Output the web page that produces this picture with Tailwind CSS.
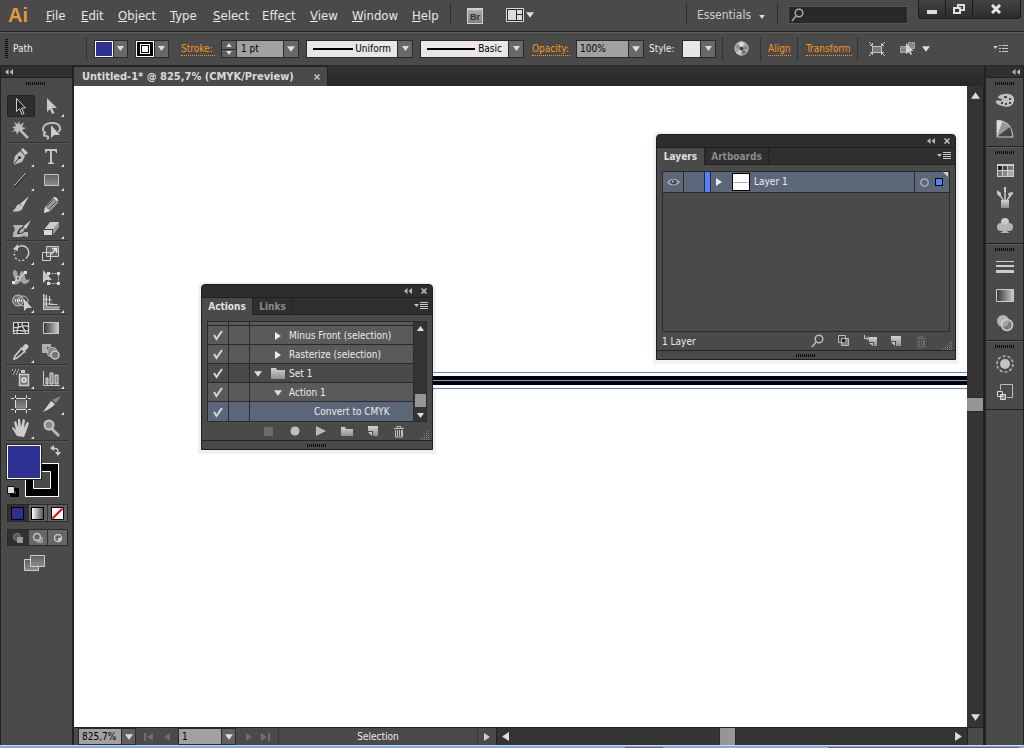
<!DOCTYPE html>
<html lang="en">
<head>
<meta charset="utf-8">
<title>Untitled-1 - Illustrator workspace</title>
<script src="https://cdn.jsdelivr.net/npm/@tailwindcss/browser@4"></script>
</head>
<body class="h-screen overflow-hidden bg-[#4a4a4a] font-['DejaVu_Sans_Condensed','DejaVu_Sans',sans-serif] text-[10px] leading-4 text-[#ececec]">
<svg class="absolute size-0" aria-hidden="true">
  <defs>
    <linearGradient id="metal" x1="0" y1="0" x2="0" y2="1"><stop offset="0" stop-color="#d2d2d2"/><stop offset="1" stop-color="#8e8e8e"/></linearGradient>
    <linearGradient id="fade" x1="0" y1="0" x2="1" y2="0"><stop offset="0" stop-color="#333"/><stop offset="1" stop-color="#ccc"/></linearGradient>
    <linearGradient id="plate" x1="0" y1="0" x2="0" y2="1"><stop offset="0" stop-color="#606060"/><stop offset="1" stop-color="#8c8c8c"/></linearGradient>
    <symbol id="down" viewBox="0 0 7 5"><path d="M0 0h7L3.500 5z" fill="#e0dce0"/></symbol>
    <symbol id="up" viewBox="0 0 7 5"><path d="M0 5h7L3.500 0z" fill="#e0dce0"/></symbol>
    <symbol id="right" viewBox="0 0 6 8"><path d="M0 0l6 4-6 4z" fill="currentColor"/></symbol>
    <symbol id="collapse" viewBox="0 0 8 6"><path d="M3.500 0v6L0 3zM8 0v6L4.500 3z" fill="#b8b8b8"/></symbol>
    <symbol id="cross" viewBox="0 0 6 6"><path d="M.5.500l5 5M5.500.5l-5 5" stroke="#c4c4c4" stroke-width="1.500"/></symbol>
    <symbol id="grip" viewBox="0 0 20 3"><path d="M.5 0v3m2-3v3m2-3v3m2-3v3m2-3v3m2-3v3m2-3v3m2-3v3m2-3v3m2-3v3" stroke="#0c0c0c"/></symbol>
    <symbol id="check" viewBox="0 0 12 12"><path d="M2 6l2.500 4L10 2" fill="none" stroke="#d8d8d8" stroke-width="2"/></symbol>
    <symbol id="panelmenu" viewBox="0 0 14 8"><path d="M0 2h5L2.500 5z" fill="#c4c4c4"/><path d="M6 .5h8M6 2.500h8M6 4.500h8M6 6.500h8" stroke="#c4c4c4"/></symbol>
    <symbol id="more" viewBox="0 0 3 3"><path d="M3 0v3H0z" fill="#e0e0e0"/></symbol>
    <symbol id="newitem" viewBox="0 0 12 12"><path d="M1 1h10v10H6V6H1z" fill="url(#metal)"/><path d="M1 7h4v4z" fill="#c8c8c8"/></symbol>
    <symbol id="trash" viewBox="0 0 12 13"><path d="M1 3.500h10M4 3V1.500h4V3M2.500 5v7h7V5M4.500 5v6m2-6v6m2-6v6" fill="none" stroke="currentColor"/></symbol>
    <symbol id="corner" viewBox="0 0 10 10"><path d="M8 1.500h1M6 3.500h1m1 0h1M4 5.500h1m1 0h1m1 0h1M2 7.500h1m1 0h1m1 0h1m1 0h1M0 9.500h1m1 0h1m1 0h1m1 0h1m1 0h1" stroke="#858585"/></symbol>
  </defs>
</svg>

<div class="flex h-full flex-col">
  <!-- Menu bar -->
  <header class="flex h-8 shrink-0 items-start border-b border-[#252525] bg-[#4a4a4a]">
    <div class="flex h-[30px] w-[38px] items-center pl-2 font-['Liberation_Sans',sans-serif] text-[20px] leading-6 font-bold text-[#e09a3a]">Ai</div>
    <nav class="flex h-8 items-center text-[13px] text-[#e8e8e8]" aria-label="Main menu">
      <button class="w-[35px] pl-2 text-left"><u>F</u>ile</button>
      <button class="w-[37px] pl-2 text-left"><u>E</u>dit</button>
      <button class="w-[52px] pl-2 text-left"><u>O</u>bject</button>
      <button class="w-[43px] pl-2 text-left"><u>T</u>ype</button>
      <button class="w-[49px] pl-2 text-left"><u>S</u>elect</button>
      <button class="w-[48px] pl-2 text-left">Effe<u>c</u>t</button>
      <button class="w-[42px] pl-2 text-left"><u>V</u>iew</button>
      <button class="w-[60px] pl-2 text-left"><u>W</u>indow</button>
      <button class="w-[46px] pl-2 text-left"><u>H</u>elp</button>
    </nav>
    <div class="mt-1 h-5 border-l border-[#2c2c2c]"></div>
    <button class="mt-2 ml-4 h-4 w-4 border border-t-2 border-[#d0d0d0] bg-linear-to-b from-[#aaa] to-[#808080] font-['Liberation_Sans',sans-serif] text-[9px] leading-3 font-bold text-[#333]">Br</button>
    <button class="mt-[7px] ml-[23px] flex items-center gap-[2px]" aria-label="Arrange documents">
      <svg width="18" height="16" viewBox="0 0 18 16"><path d="M.5 1.500h17v13H.5z" fill="#2a2a2a" stroke="#dcdcdc"/><path d="M2 3h8v10H2zM11 3h5v4h-5zM11 8h5v5h-5z" fill="#dcdcdc"/></svg>
      <svg width="8" height="6"><use href="#down"/></svg>
    </button>
    <div class="flex-1"></div>
    <div class="mt-1 h-5 border-l border-[#2c2c2c]"></div>
    <button class="mt-[7px] flex w-[90px] items-center gap-2 pl-[10px] text-[12px] text-[#cfcfcf]">Essentials<svg class="mt-1" width="6" height="4"><use href="#down"/></svg></button>
    <div class="mt-1 h-5 border-l border-[#2c2c2c]"></div>
    <label class="mt-[6px] ml-[10px] flex h-[18px] w-[120px] items-center border border-[#555] bg-[#292929] pl-[2px]">
      <svg class="shrink-0" width="13" height="14" viewBox="0 0 13 14" fill="none" stroke="#aaa" stroke-width="1.500"><circle cx="8" cy="5" r="3.800"/><path d="M5 8l-4 5"/></svg>
      <input class="w-full min-w-0 bg-transparent text-[10px] outline-none" aria-label="Search">
    </label>
    <div class="mr-[3px] ml-[10px] flex h-[19px] rounded-b-sm border border-t-0 border-[#1c1c1c] bg-linear-to-b from-[#444] to-[#2c2c2c]">
      <button class="flex w-[27px] items-center justify-center border-r border-[#1c1c1c]" aria-label="Minimize"><svg width="11" height="12"><path d="M0 7h10v4H0z" fill="#ddd"/></svg></button>
      <button class="flex w-[27px] items-center justify-center border-r border-[#1c1c1c]" aria-label="Restore"><svg width="12" height="12" fill="none" stroke="#e0e0e0" stroke-width="2"><path d="M5 5V2h6v5H8"/><path d="M1 5h6v5H1z"/></svg></button>
      <button class="flex w-[47px] items-center justify-center" aria-label="Close"><svg width="11" height="10"><path d="M1 1l8 8M9 1L1 9" stroke="#e4e4e4" stroke-width="3"/></svg></button>
    </div>
  </header>

  <!-- Control bar -->
  <section class="flex h-[34px] shrink-0 items-center border-b border-[#252525] bg-[#4a4a4a] shadow-[inset_0_1px_0_#5c5c5c]" aria-label="Control bar">
    <svg class="ml-[5px]" width="3" height="20"><path d="M1.500 0v20" stroke="#0c0c0c" stroke-width="3" stroke-dasharray="1 1"/></svg>
    <span class="ml-[5px] w-[73px]">Path</span>
    <div class="h-6 border-l border-[#333]"></div>
    <button class="ml-[7px] flex h-[18px] border border-[#2a2a2a]" aria-label="Fill">
      <span class="h-4 w-[18px] border border-white bg-[#2d3193]"></span>
      <span class="grid h-4 w-[14px] place-items-center border-l border-[#2a2a2a] bg-[#686868]"><svg width="7" height="5"><use href="#down"/></svg></span>
    </button>
    <button class="ml-[7px] flex h-[18px] border border-[#2a2a2a]" aria-label="Stroke colour">
      <span class="grid h-4 w-[18px] place-items-center border border-white bg-black"><span class="grid size-[10px] place-items-center border border-white"><span class="size-[6px] bg-white"></span></span></span>
      <span class="grid h-4 w-[14px] place-items-center border-l border-[#2a2a2a] bg-[#686868]"><svg width="7" height="5"><use href="#down"/></svg></span>
    </button>
    <a href="#" class="ml-[12px] w-[34px] border-b border-dotted border-[#f7931e] leading-[13px] text-[#f7931e]">Stroke:</a>
    <div class="ml-[6px] flex h-[18px] border border-[#2a2a2a]">
      <div class="flex w-[15px] flex-col border-r border-[#2a2a2a] bg-[#606060]">
        <button class="grid h-2 place-items-center" aria-label="Increase"><svg width="6" height="4"><use href="#up"/></svg></button>
        <button class="grid h-2 place-items-center border-t border-[#2a2a2a]" aria-label="Decrease"><svg width="6" height="4"><use href="#down"/></svg></button>
      </div>
      <input class="h-4 w-[46px] bg-[#a39fa3] pl-1 text-black" value="1 pt" aria-label="Stroke weight">
      <button class="grid w-[15px] place-items-center border-l border-[#2a2a2a] bg-[#686868]" aria-label="Stroke weights"><svg width="8" height="6"><use href="#down"/></svg></button>
    </div>
    <button class="ml-[7px] flex h-[18px] border border-[#2a2a2a]" aria-label="Width profile">
      <span class="flex h-4 w-[90px] items-center justify-between bg-[#e9e5e9] pr-[6px] pl-[6px] text-black"><span class="h-[2px] w-10 bg-black"></span>Uniform</span>
      <span class="grid h-4 w-[15px] place-items-center border-l border-[#2a2a2a] bg-[#686868]"><svg width="7" height="5"><use href="#down"/></svg></span>
    </button>
    <button class="ml-[7px] flex h-[18px] border border-[#2a2a2a]" aria-label="Brush definition">
      <span class="flex h-4 w-[87px] items-center justify-between bg-[#e9e5e9] pr-[6px] pl-[6px] text-black"><span class="h-[2px] w-12 bg-black"></span>Basic</span>
      <span class="grid h-4 w-[15px] place-items-center border-l border-[#2a2a2a] bg-[#686868]"><svg width="7" height="5"><use href="#down"/></svg></span>
    </button>
    <a href="#" class="ml-[8px] w-[38px] border-b border-dotted border-[#f7931e] leading-[13px] text-[#f7931e]">Opacity:</a>
    <div class="ml-[6px] flex h-[18px] border border-[#2a2a2a]">
      <input class="h-4 w-[51px] bg-[#a39fa3] pl-[3px] text-black" value="100%" aria-label="Opacity">
      <button class="grid w-[15px] place-items-center border-l border-[#2a2a2a] bg-[#686868]" aria-label="Opacity values"><svg width="8" height="6"><use href="#down"/></svg></button>
    </div>
    <span class="ml-[5px] w-[28px]">Style:</span>
    <button class="ml-[5px] flex h-[18px] border border-[#2a2a2a]" aria-label="Graphic style">
      <span class="h-4 w-[17px] bg-[#e9e5e9]"></span>
      <span class="grid h-4 w-[15px] place-items-center border-l border-[#2a2a2a] bg-[#686868]"><svg width="7" height="5"><use href="#down"/></svg></span>
    </button>
    <div class="ml-[6px] h-6 border-l border-[#333]"></div>
    <button class="ml-[11px]" aria-label="Recolor artwork"><svg width="15" height="15" viewBox="0 0 15 15"><circle cx="7.500" cy="7.500" r="7" fill="#a4a4a4"/><path d="M7.500 7.500L4 1.500A7 7 0 0 1 11 1.500z" fill="#d8d8d8"/><path d="M7.500 7.500L14 4a7 7 0 0 1 .5 5z" fill="#888"/><path d="M7.500 7.500L13 12a7 7 0 0 1-4 2.500z" fill="#6c6c6c"/><path d="M7.500 7.500L7 14.500A7 7 0 0 1 2 12z" fill="#ccc"/><path d="M7.500 7.500L.5 6a7 7 0 0 1 2-3z" fill="#888"/><circle cx="7.500" cy="7.500" r="6.500" fill="none" stroke="#b8b8b8"/><circle cx="7.500" cy="7.500" r="1.800" fill="#3a3a3a"/></svg></button>
    <div class="ml-[11px] h-6 border-l border-[#333]"></div>
    <a href="#" class="ml-[7px] w-[23px] border-b border-dotted border-[#f7931e] leading-[13px] text-[#f7931e]">Align</a>
    <div class="ml-[6px] h-6 border-l border-[#333]"></div>
    <a href="#" class="ml-[8px] w-[46px] border-b border-dotted border-[#f7931e] leading-[13px] text-[#f7931e]">Transform</a>
    <div class="ml-[5px] h-6 border-l border-[#333]"></div>
    <button class="ml-[11px]" aria-label="Isolate selected object"><svg width="16" height="14" viewBox="0 0 16 14" fill="none" stroke="#c4c4c4"><path d="M3.500 4.500h9v6h-9z" fill="#777"/><path d="M0 0l3 3M16 0l-3 3M0 14l3-3M16 14l-3-3"/><path d="M1 3.500h2.500V1M15 3.500h-2.500V1M1 10.500h2.500V13M15 10.500h-2.500V13"/></svg></button>
    <button class="ml-[14px] flex items-center gap-[6px]" aria-label="Select similar objects"><svg width="17" height="15" viewBox="0 0 17 15"><path d="M1.500 5.500h6v6h-6zM9.500 1.500h6v6h-6z" fill="#888" stroke="#c4c4c4" stroke-dasharray="2 1"/><path d="M7 2v11l3-2 1.500 3 1.500-1-1.500-3h3z" fill="#d4d4d4"/></svg><svg width="8" height="6"><use href="#down"/></svg></button>
    <div class="flex-1"></div>
    <button class="mr-[16px]" aria-label="Control bar menu"><svg width="15" height="9" viewBox="0 0 15 9"><path d="M0 2h5L2.500 5z" fill="#c8c8c8"/><path d="M6 1.500h2m1 0h6m-9 3h2m1 0h6m-9 3h2m1 0h6" stroke="#c8c8c8"/></svg></button>
  </section>

  <main class="flex min-h-0 flex-1">
    <!-- Tools -->
    <aside class="flex w-[74px] shrink-0 flex-col border-r-2 border-l border-[#222] bg-[#4a4a4a]" aria-label="Tools">
      <button class="flex h-3 items-center border-b border-[#222] bg-[#2f2f2f] pl-1" aria-label="Collapse tools"><svg width="8" height="6"><use href="#collapse"/></svg></button>
      <div class="flex h-4 items-start pt-[4px] pl-[25px]"><svg width="20" height="3"><use href="#grip"/></svg></div>
      <div class="flex flex-col pl-[5px]">
        <div class="grid w-[60px] grid-cols-2 [&_button]:h-6">
          <button aria-label="Selection"><svg width="30" height="24"><rect x="1.500" y="1.500" width="27" height="21" rx="1" fill="#2e2e2e" stroke="#242424"/><path d="M10.500 4.500v13l3-3 2.500 6 2-1-2.500-5.500h4z" fill="#222" stroke="#d0d0d0"/></svg></button>
          <button aria-label="Direct selection"><svg width="30" height="24"><path d="M11 4v14l3-3 2 5 2.500-1L16 14h5z" fill="#c8c8c8"/><use href="#more" x="25" y="20" width="3" height="3"/></svg></button>
          <button aria-label="Magic wand"><svg width="30" height="24"><path d="M13 3l1 4 4-3-2 5 4 1-4 2 1 3-4-2-2 4-1-4-4 1 3-3-3-2 4-1-2-4 4 2z" fill="#bcbcbc"/><path d="M15 13l7 7" stroke="#bcbcbc" stroke-width="2.500"/></svg></button>
          <button aria-label="Lasso"><svg width="30" height="24"><path d="M10 15C5 13 6 6 15 5s11 6 7 9M10 15c-3 0-3 3 0 3s3 2 1 3" fill="none" stroke="#bcbcbc" stroke-width="2"/><path d="M15 7v13l3-3h6z" fill="#ccc"/></svg></button>
        </div>
        <div class="mr-1 h-[2px] border-t border-[#333] bg-[#555]"></div>
        <div class="grid w-[60px] grid-cols-2 [&_button]:h-6">
          <button aria-label="Pen"><svg width="30" height="24"><path d="M17 4l5 5-3 2-4-5z" fill="#ccc"/><path d="M14 7l5 5-3 6-9 3 2-9z" fill="#bdbdbd"/><path d="M7 21l6-7" stroke="#333"/><circle cx="13.500" cy="13.500" r="1.500" fill="#333"/><use href="#more" x="25" y="20" width="3" height="3"/></svg></button>
          <button aria-label="Type"><svg width="30" height="24"><path d="M9 5h12v4h-1l-1-2h-3v11l2 1v1h-6v-1l2-1V7h-3l-1 2H9z" fill="#c4c4c4"/><use href="#more" x="25" y="20" width="3" height="3"/></svg></button>
          <button aria-label="Line segment"><svg width="30" height="24"><path d="M8 19L21 5" stroke="#222" stroke-width="1.500"/><path d="M8 18L20 5" stroke="#d4d4d4"/><use href="#more" x="25" y="20" width="3" height="3"/></svg></button>
          <button aria-label="Rectangle"><svg width="30" height="24"><path d="M8.500 6.500h14v11h-14z" fill="url(#plate)" stroke="#c4c4c4"/><use href="#more" x="25" y="20" width="3" height="3"/></svg></button>
          <button aria-label="Paintbrush"><svg width="30" height="24"><path d="M23 4l-6 11-3-3z" fill="#d0d0d0"/><path d="M13 12l4 3c-1 5-7 5-11 4 4-1 3-5 7-7z" fill="#c4c4c4"/></svg></button>
          <button aria-label="Pencil"><svg width="30" height="24"><path d="M17 6l5 5-8 8-6 2 1-6z" fill="#999"/><path d="M17 6c2-3 6 1 5 4z" fill="#ddd"/><path d="M9 15l5 4-6 2z" fill="#d8d8d8"/><path d="M11 14l7-7m-5 10l7-7" stroke="#555"/><use href="#more" x="25" y="20" width="3" height="3"/></svg></button>
          <button aria-label="Blob brush"><svg width="30" height="24"><path d="M7 9h10l-3 7h8v5l-4-1-4 1H7v-4l2-3z" fill="#b4b4b4"/><path d="M11 18c1-6 5-7 7-7l2 2c-2 5-5 5-9 5z" fill="#333"/><path d="M13 17c1-4 3-5 5-5l1 1c-2 4-3 4-6 4z" fill="#aaa"/><path d="M25 4l-5 9-3-2z" fill="#d0d0d0"/></svg></button>
          <button aria-label="Eraser"><svg width="30" height="24"><path d="M14 6h9l-5 7-11 2z" fill="#ccc"/><path d="M8 14h8v5H8z" fill="#dadada"/><path d="M17 13l6-7v5l-6 8z" fill="#999"/><path d="M8 13.500h8.500V19" fill="none" stroke="#444"/><use href="#more" x="25" y="20" width="3" height="3"/></svg></button>
        </div>
        <div class="mr-1 h-[2px] border-t border-[#333] bg-[#555]"></div>
        <div class="grid w-[60px] grid-cols-2 [&_button]:h-6">
          <button aria-label="Rotate"><svg width="30" height="24"><path d="M11 6a6.500 6.500 0 0 1 10 9" fill="none" stroke="#ccc" stroke-width="1.500"/><path d="M21 15a6.500 6.500 0 0 1-12-6" fill="none" stroke="#ccc" stroke-width="1.500" stroke-dasharray="2 2"/><path d="M12 2v7L7 7z" fill="#ccc"/><use href="#more" x="25" y="20" width="3" height="3"/></svg></button>
          <button aria-label="Scale"><svg width="30" height="24"><path d="M10.500 4.500h12v10h-12z" fill="#666" stroke="#d0d0d0"/><path d="M6.500 10.500h8v8h-8z" fill="none" stroke="#d0d0d0"/><path d="M15 12l5-5m-4-.5h4.500V11" fill="none" stroke="#e8e8e8" stroke-width="1.500"/><use href="#more" x="25" y="20" width="3" height="3"/></svg></button>
          <button aria-label="Width"><svg width="30" height="24"><path d="M8 4c5 0 3 6 4 7 2 1 1-5 4-6 4 0 2 9 5 9 2 0 3-1 3-1-1 5-7 7-9 2-2 3-7 5-9 3 0 0 3-1 3-4S5 8 8 4z" fill="#a4a4a4"/><path d="M7 17L20 6" stroke="#eee"/><circle cx="12" cy="12.500" r="1.800" fill="#555" stroke="#eee"/><path d="M6 15h3v3H6zM18 5h3v3h-3z" fill="#e0e0e0"/><use href="#more" x="25" y="20" width="3" height="3"/></svg></button>
          <button aria-label="Free transform"><svg width="30" height="24"><path d="M12.500 7.500h10v10h-10z" fill="none" stroke="#bbb" stroke-dasharray="2 1"/><path d="M11 6h3v3h-3zM21 6h3v3h-3zM11 16h3v3h-3zM21 16h3v3h-3z" fill="#ddd"/><path d="M7 4v13l3-3h6z" fill="#c8c8c8"/></svg></button>
          <button aria-label="Shape builder"><svg width="30" height="24"><circle cx="12" cy="10.500" r="5.500" fill="#777" stroke="#c0c0c0"/><circle cx="17" cy="11" r="5" fill="none" stroke="#c0c0c0"/><path d="M9 10.500h8" stroke="#fff" stroke-dasharray="1 1" stroke-width="2"/><path d="M18 9v12l3-3h5z" fill="#d0d0d0"/><use href="#more" x="25" y="20" width="3" height="3"/></svg></button>
          <button aria-label="Perspective grid"><svg width="30" height="24"><path d="M7 4l4 1v12h12v3H7z" fill="#888"/><path d="M7.500 4v15.500H24M10.500 5v12H24M13.500 6v8.500h8M8 9l8 1m-8 4h9" fill="none" stroke="#ccc"/><use href="#more" x="25" y="20" width="3" height="3"/></svg></button>
        </div>
        <div class="mr-1 h-[2px] border-t border-[#333] bg-[#555]"></div>
        <div class="grid w-[60px] grid-cols-2 [&_button]:h-6">
          <button aria-label="Mesh"><svg width="30" height="24"><path d="M7 6h16v12H7z" fill="#333"/><path d="M7.500 6.500h15v11h-15zM7 11c5 3 9-4 16 0M7 16c5-5 10 2 16-2M11 6c5 5-3 8 1 12M17 6c-4 5 4 7 2 12" fill="none" stroke="#d4d4d4" stroke-width="1.200"/></svg></button>
          <button aria-label="Gradient"><svg width="30" height="24"><path d="M7.500 6.500h15v11h-15z" fill="url(#fade)" stroke="#c8c8c8"/></svg></button>
          <button aria-label="Eyedropper"><svg width="30" height="24"><path d="M18 5c2-3 7 1 3 4l-2 2 1 1-1 1-5-5 1-1 1 1z" fill="#ccc"/><path d="M15 9l-6 7-1 3 3-1 7-6" fill="none" stroke="#d0d0d0" stroke-width="1.500"/><use href="#more" x="25" y="20" width="3" height="3"/></svg></button>
          <button aria-label="Blend"><svg width="30" height="24"><path d="M6 4h9v3h-4v6H6z" fill="#b0b0b0"/><rect x="11.500" y="7.500" width="9" height="9" rx="3" fill="#888" stroke="#b8b8b8"/><circle cx="19" cy="15" r="4" fill="#777" stroke="#ccc" stroke-width="1.500"/></svg></button>
        </div>
        <div class="mr-1 h-[2px] border-t border-[#333] bg-[#555]"></div>
        <div class="grid w-[60px] grid-cols-2 [&_button]:h-6">
          <button aria-label="Symbol sprayer"><svg width="30" height="24"><path d="M6 4h1m2 0h1m2 0h1m-5 2h1m2 0h1m-5 2h1m2 0h1m2 0h1" stroke="#ccc" stroke-width="1.500"/><path d="M15 4h4v3h-4z" fill="#ccc"/><path d="M13.500 8.500h9v11h-9z" fill="#777" stroke="#ccc" stroke-width="1.500"/><circle cx="18" cy="14" r="2" fill="none" stroke="#eee" stroke-width="1.500"/><use href="#more" x="25" y="20" width="3" height="3"/></svg></button>
          <button aria-label="Column graph"><svg width="30" height="24"><path d="M7.500 5v14.500H24" fill="none" stroke="#ccc"/><path d="M10 12h2v6h-2zM14 7h3v11h-3zM19 9h3v9h-3z" fill="#888" stroke="#ddd"/><use href="#more" x="25" y="20" width="3" height="3"/></svg></button>
        </div>
        <div class="mr-1 h-[2px] border-t border-[#333] bg-[#555]"></div>
        <div class="grid w-[60px] grid-cols-2 [&_button]:h-6">
          <button aria-label="Artboard"><svg width="30" height="24"><path d="M9.500 7.500h11v9h-11z" fill="url(#plate)"/><path d="M5 6.500h3m2 0h10m2 0h3M5 17.500h3m2 0h10m2 0h3M9.500 3v3m0 2v8m0 2v3M20.500 3v3m0 2v8m0 2v3" stroke="#ddd"/></svg></button>
          <button aria-label="Slice"><svg width="30" height="24"><path d="M25 4l-5 7-4-3z" fill="#888"/><path d="M15 9l4 3c-3 4-8 6-12 8z" fill="#d4d4d4"/><use href="#more" x="25" y="20" width="3" height="3"/></svg></button>
          <button aria-label="Hand"><svg width="30" height="24"><path d="M11 20l-5-8 1-1 3 3-2-8 2-1 2 6V3h2l1 8 2-8 2 1-1 8 3-6 2 1-3 9-2 5z" fill="#ccc"/><use href="#more" x="25" y="20" width="3" height="3"/></svg></button>
          <button aria-label="Zoom"><svg width="30" height="24"><circle cx="13" cy="9" r="4.500" fill="#888" stroke="#c8c8c8" stroke-width="2"/><path d="M16 13l7 7" stroke="#b8b8b8" stroke-width="3"/></svg></button>
        </div>
        <div class="mr-1 h-[2px] border-t border-[#333] bg-[#555]"></div>
      </div>
      <button class="mt-[2px] ml-[5px] w-[56px]" aria-label="Fill and stroke">
        <svg width="56" height="54" viewBox="0 0 56 54"><path d="M19 19h34v34H19z" fill="#fff"/><path d="M20 20h32v32H20z" fill="#000"/><path d="M27.500 27.500h17v17h-17z" fill="#4a4a4a" stroke="#fff"/><path d="M0 0h36v36H0z" fill="#222"/><path d="M1 1h34v34H1z" fill="#fff"/><path d="M2 2h32v32H2z" fill="#2d3193"/><path d="M48 1v6l-4-3zM49 8h6l-3 4z" fill="#ccc"/><path d="M46 4.500h4q2 0 2 4" fill="none" stroke="#ccc" stroke-width="1.500"/><path d="M5.500 45.500h6v6h-6z" fill="none" stroke="#000" stroke-width="3"/><path d="M1.500 42.500h7v7h-7z" fill="#ddd" stroke="#111"/></svg>
      </button>
      <div class="mt-[6px] ml-[6px] grid h-[18px] w-[61px] grid-cols-3 border border-[#2a2a2a] bg-[#606060]">
        <button class="grid place-items-center bg-[#303030]" aria-label="Color"><span class="size-[13px] border border-black bg-[#2d3193]"></span></button>
        <button class="grid place-items-center border-l border-[#333]" aria-label="Gradient fill"><span class="size-[13px] border border-black bg-linear-to-r from-white to-[#555]"></span></button>
        <button class="grid place-items-center border-l border-[#333]" aria-label="None"><svg width="13" height="13"><path d="M.5.500h12v12H.5z" fill="#fff" stroke="#000"/><path d="M1.500 11.500l10-10" stroke="#f00" stroke-width="2"/></svg></button>
      </div>
      <div class="mt-[7px] ml-[6px] grid h-[17px] w-[61px] grid-cols-3 border border-[#2a2a2a] bg-[#666]">
        <button class="grid place-items-center bg-[#303030]" aria-label="Draw normal"><svg width="12" height="12"><circle cx="5" cy="5" r="3.500" fill="#555" stroke="#888"/><path d="M5 5h6v6H5z" fill="#999"/></svg></button>
        <button class="grid place-items-center border-l border-[#333]" aria-label="Draw behind"><svg width="12" height="12"><path d="M5 5h6v6H5z" fill="#999"/><circle cx="5" cy="5" r="3.500" fill="#666" stroke="#c4c4c4" stroke-width="1.500"/></svg></button>
        <button class="grid place-items-center border-l border-[#333]" aria-label="Draw inside"><svg width="12" height="12"><circle cx="6" cy="6" r="3.500" fill="#666" stroke="#c4c4c4" stroke-width="1.500"/><path d="M6 6h4l-3 4z" fill="#ddd"/></svg></button>
      </div>
      <button class="mt-[8px] ml-[23px] w-[22px]" aria-label="Screen mode"><svg width="22" height="18"><path d="M.5 5.500h14v11H.5z" fill="url(#plate)" stroke="#ccc"/><path d="M6.500 1.500h14v11h-14z" fill="url(#plate)" stroke="#ccc"/></svg></button>
    </aside>

    <!-- Document -->
    <section class="flex min-w-0 flex-1 flex-col">
      <div class="flex h-5 shrink-0 bg-linear-to-b from-[#333] to-[#282828]">
        <div class="flex h-5 items-center border-t border-r border-[#222] bg-[#4a4a4a] pr-[7px] pl-2 text-[11px] font-bold text-[#dadada]">
          <span class="w-[231px] whitespace-nowrap">Untitled-1* @ 825,7% (CMYK/Preview)</span>
          <button class="pl-[1px]" aria-label="Close document"><svg width="6" height="6"><use href="#cross"/></svg></button>
        </div>
      </div>
      <div class="flex min-h-0 flex-1">
        <div class="relative min-w-0 flex-1 overflow-hidden bg-white">
          <!-- Actions panel -->
          <section class="absolute top-[198px] left-[127px] flex w-[232px] flex-col rounded-t-sm border border-[#1d1d1d] bg-[#4a4a4a] shadow-[0_1px_0_3px_#eef2f1]" aria-label="Actions panel">
            <div class="flex h-[13px] items-center justify-end gap-[9px] border-b border-[#1f1f1f] bg-[#2d2d2d] pr-[5px]">
              <button aria-label="Collapse"><svg width="8" height="6"><use href="#collapse"/></svg></button>
              <button aria-label="Close"><svg width="6" height="6"><use href="#cross"/></svg></button>
            </div>
            <div class="flex h-[17px] items-stretch bg-[#2f2f2f] font-bold" role="tablist">
              <button role="tab" class="w-[50px] bg-[#4a4a4a] text-[#e0e0e0]">Actions</button>
              <button role="tab" class="w-[41px] border-x border-[#222] text-[#8a8a8a] shadow-[inset_0_-1px_0_#222]">Links</button>
              <div class="flex flex-1 items-center justify-end border-b border-[#222] pr-1"><button aria-label="Panel menu"><svg width="14" height="8"><use href="#panelmenu"/></svg></button></div>
            </div>
            <div class="mx-[5px] mt-[6px] flex h-[101px] border border-[#2a2a2a]">
              <div class="flex flex-1 flex-col justify-end">
                <div class="flex h-1 border-b border-[#2a2a2a] bg-[#5a5a5a]"><span class="w-[21px] border-r border-[#2a2a2a]"></span><span class="w-[21px] border-r border-[#2a2a2a]"></span></div>
                <div class="flex h-[19px] items-stretch border-b border-[#2a2a2a] bg-[#5a5a5a]">
                  <label class="grid w-[21px] place-items-center border-r border-[#2a2a2a]"><input type="checkbox" checked class="col-start-1 row-start-1 size-3 appearance-none" aria-label="Toggle Minus Front"><svg class="col-start-1 row-start-1" width="12" height="12"><use href="#check"/></svg></label>
                  <span class="w-[21px] border-r border-[#2a2a2a]"></span>
                  <div class="flex flex-1 items-center pt-px pl-[25px]"><svg width="6" height="8"><use href="#right"/></svg><span class="pl-2">Minus Front (selection)</span></div>
                </div>
                <div class="flex h-[19px] items-stretch border-b border-[#2a2a2a] bg-[#5a5a5a]">
                  <label class="grid w-[21px] place-items-center border-r border-[#2a2a2a]"><input type="checkbox" checked class="col-start-1 row-start-1 size-3 appearance-none" aria-label="Toggle Rasterize"><svg class="col-start-1 row-start-1" width="12" height="12"><use href="#check"/></svg></label>
                  <span class="w-[21px] border-r border-[#2a2a2a]"></span>
                  <div class="flex flex-1 items-center pt-px pl-[25px]"><svg width="6" height="8"><use href="#right"/></svg><span class="pl-2">Rasterize (selection)</span></div>
                </div>
                <div class="flex h-[19px] items-stretch border-b border-[#2a2a2a] bg-[#4a4a4a]">
                  <label class="grid w-[21px] place-items-center border-r border-[#2a2a2a]"><input type="checkbox" checked class="col-start-1 row-start-1 size-3 appearance-none" aria-label="Toggle Set 1"><svg class="col-start-1 row-start-1" width="12" height="12"><use href="#check"/></svg></label>
                  <span class="w-[21px] border-r border-[#2a2a2a]"></span>
                  <div class="flex flex-1 items-center pt-px pl-1"><svg width="8" height="6"><use href="#down"/></svg><svg class="ml-[9px]" width="14" height="11"><path d="M0 0h5l1 2h8v9H0z" fill="url(#metal)"/></svg><span class="pl-1">Set 1</span></div>
                </div>
                <div class="flex h-[19px] items-stretch border-b border-[#2a2a2a] bg-[#5a5a5a]">
                  <label class="grid w-[21px] place-items-center border-r border-[#2a2a2a]"><input type="checkbox" checked class="col-start-1 row-start-1 size-3 appearance-none" aria-label="Toggle Action 1"><svg class="col-start-1 row-start-1" width="12" height="12"><use href="#check"/></svg></label>
                  <span class="w-[21px] border-r border-[#2a2a2a]"></span>
                  <div class="flex flex-1 items-center pt-px pl-6"><svg width="8" height="6"><use href="#down"/></svg><span class="pl-[7px]">Action 1</span></div>
                </div>
                <div class="flex h-[19px] items-stretch bg-[#5b6679]">
                  <label class="grid w-[21px] place-items-center border-r border-[#2a2a2a]"><input type="checkbox" checked class="col-start-1 row-start-1 size-3 appearance-none" aria-label="Toggle Convert to CMYK"><svg class="col-start-1 row-start-1" width="12" height="12"><use href="#check"/></svg></label>
                  <span class="w-[21px] border-r border-[#2a2a2a]"></span>
                  <div class="flex flex-1 items-center pl-16">Convert to CMYK</div>
                </div>
              </div>
              <div class="flex w-[13px] flex-col items-center border-l border-[#2a2a2a] bg-[#343434] pt-1 pb-[3px]">
                <svg width="7" height="5"><use href="#up"/></svg>
                <div class="mt-auto mb-[6px] h-[13px] w-[11px] bg-[#989498]"></div>
                <svg width="7" height="5"><use href="#down"/></svg>
              </div>
            </div>
            <div class="flex h-[19px] items-center border-b border-[#252525]">
              <div class="ml-[61px] flex items-center gap-[14px]">
                <button aria-label="Stop"><svg width="12" height="12"><path d="M1 2h9v9H1z" fill="#6c6c6c"/></svg></button>
                <button aria-label="Record"><svg width="12" height="12"><circle cx="6" cy="6" r="4.500" fill="#c0c0c0"/></svg></button>
                <button aria-label="Play"><svg width="12" height="12"><path d="M1 1l10 5-10 5z" fill="#bbb"/></svg></button>
                <button aria-label="New set"><svg width="12" height="12"><path d="M0 2h4l1 2h7v7H0z" fill="url(#metal)"/></svg></button>
                <button aria-label="New action"><svg width="12" height="12"><use href="#newitem"/></svg></button>
                <button class="text-[#c0c0c0]" aria-label="Delete"><svg width="12" height="13"><use href="#trash"/></svg></button>
              </div>
              <svg class="mt-auto mr-[2px] ml-auto" width="10" height="10"><use href="#corner"/></svg>
            </div>
            <div class="flex h-2 items-center justify-center"><svg width="20" height="3"><use href="#grip"/></svg></div>
          </section>

          <!-- Artwork: a stroked path with its selection edges -->
          <div class="absolute top-[286px] right-0 left-[359px] flex h-[17px] flex-col justify-center border-y border-[#4f80ff] bg-white">
            <div class="h-[4px] bg-black"></div>
            <div class="h-px bg-[#7d9de8]"></div>
            <div class="h-[4px] bg-black"></div>
          </div>

          <!-- Layers panel -->
          <section class="absolute top-[48px] right-[11px] flex w-[300px] flex-col rounded-t-sm border border-[#1d1d1d] bg-[#4a4a4a] shadow-[0_1px_0_3px_#eef2f1]" aria-label="Layers panel">
            <div class="flex h-[13px] items-center justify-end gap-[9px] border-b border-[#1f1f1f] bg-[#2d2d2d] pr-[5px]">
              <button aria-label="Collapse"><svg width="8" height="6"><use href="#collapse"/></svg></button>
              <button aria-label="Close"><svg width="6" height="6"><use href="#cross"/></svg></button>
            </div>
            <div class="flex h-[17px] items-stretch bg-[#2f2f2f] font-bold" role="tablist">
              <button role="tab" class="w-[47px] bg-[#4a4a4a] text-[#e0e0e0]">Layers</button>
              <button role="tab" class="w-[65px] border-x border-[#222] text-[#8a8a8a] shadow-[inset_0_-1px_0_#222]">Artboards</button>
              <div class="flex flex-1 items-center justify-end border-b border-[#222] pr-1"><button aria-label="Panel menu"><svg width="14" height="8"><use href="#panelmenu"/></svg></button></div>
            </div>
            <div class="mx-[5px] mt-[6px] h-[161px] border border-[#2a2a2a]">
              <div class="flex h-[21px] items-stretch border-b border-[#2a2a2a] bg-[#5b6679]">
                <button class="grid w-[21px] place-items-center border-r border-[#2a2a2a]" aria-label="Layer visibility"><svg width="13" height="10"><path d="M.5 5.500Q6-1 12.500 5 6 10.500.5 5.500z" fill="#777" stroke="#c4c4c4"/><circle cx="6.500" cy="5" r="2.500" fill="#3a3f4a"/><circle cx="6" cy="4.500" r="1" fill="#ddd"/></svg></button>
                <span class="w-[21px] border-r border-[#2a2a2a]"></span>
                <span class="w-[6px] border-r border-[#2a2a2a] bg-[#4f80ff]"></span>
                <div class="flex flex-1 items-center pl-[5px]"><svg width="6" height="8"><use href="#right"/></svg><span class="ml-[10px] grid h-[18px] w-[18px] items-center border border-black bg-white"><span class="h-px bg-[#b4b0c4]"></span></span><span class="pl-1">Layer 1</span></div>
                <div class="flex w-[35px] items-center border-l border-[#2a2a2a] pl-[5px]"><svg width="9" height="9"><circle cx="4.500" cy="4.500" r="3.700" fill="none" stroke="#b8b8b8" stroke-width="1.300"/></svg><span class="ml-[6px] size-2 border border-black bg-[#4f80ff]"></span><svg class="ml-auto self-start" width="6" height="6"><path d="M0 0h5v5z" fill="#d0d0d0"/></svg></div>
              </div>
            </div>
            <div class="flex h-[19px] items-center border-b border-[#252525] pl-[5px]">
              <span class="pt-px">1 Layer</span>
              <div class="mr-[16px] ml-auto flex items-center gap-[13px]">
                <button aria-label="Locate object"><svg width="13" height="14" fill="none" stroke="#bbb" stroke-width="1.500"><circle cx="8" cy="5" r="3.800"/><path d="M5 8l-4 5"/></svg></button>
                <button aria-label="Clipping mask"><svg width="13" height="12"><path d="M1.500.5h7v7h-7z" fill="none" stroke="#bbb"/><path d="M4.500 3.500h7v7h-7z" fill="#888" stroke="#bbb"/><path d="M5 4h3v3H5z" fill="#222"/></svg></button>
                <button aria-label="New sublayer"><svg width="14" height="12"><path d="M6 2h8v9h-3V7H6z" fill="url(#metal)"/><path d="M1.500 0v3.500h4M4 1.500l2 2-2 2" fill="none" stroke="#ccc"/><path d="M6 8h4v3z" fill="#c8c8c8"/></svg></button>
                <button aria-label="New layer"><svg width="12" height="12"><use href="#newitem"/></svg></button>
                <button class="text-[#6c6c6c]" aria-label="Delete layer"><svg width="12" height="13"><use href="#trash"/></svg></button>
              </div>
              <svg class="mt-auto mr-[2px]" width="10" height="10"><use href="#corner"/></svg>
            </div>
            <div class="flex h-2 items-center justify-center"><svg width="20" height="3"><use href="#grip"/></svg></div>
          </section>
        </div>
        <!-- Vertical scrollbar -->
        <div class="flex w-[17px] shrink-0 flex-col items-center border-r border-[#222] bg-[#343434] pt-[6px] pb-[6px]">
          <svg width="9" height="7"><use href="#up"/></svg>
          <div class="flex w-full flex-1 flex-col"><div class="basis-[48.500%]"></div><div class="h-[15px] border-y border-[#2a2a2a] bg-[#989498]"></div></div>
          <svg width="9" height="7"><use href="#down"/></svg>
        </div>
      </div>
      <!-- Status bar -->
      <footer class="flex h-[18px] shrink-0 items-stretch border-t border-[#222] bg-[#4a4a4a]">
        <div class="ml-1 flex border border-[#2a2a2a]">
          <input class="w-[42px] bg-[#a39fa3] pl-[3px] text-black" value="825,7%" aria-label="Zoom level">
          <button class="grid w-[14px] place-items-center border-l border-[#2a2a2a] bg-[#606060]" aria-label="Zoom levels"><svg width="8" height="6"><use href="#down"/></svg></button>
        </div>
        <div class="flex w-[42px] items-center gap-[11px] pl-2 text-[#6e6e6e]">
          <button aria-label="First artboard"><svg width="9" height="8"><path d="M0 0h2v8H0zM9 0v8L3 4z" fill="currentColor"/></svg></button>
          <button aria-label="Previous artboard"><svg width="6" height="8"><path d="M6 0v8L0 4z" fill="currentColor"/></svg></button>
        </div>
        <div class="flex border border-[#2a2a2a]">
          <input class="w-[42px] bg-[#a39fa3] pl-[3px] text-black" value="1" aria-label="Artboard number">
          <button class="grid w-[14px] place-items-center border-l border-[#2a2a2a] bg-[#606060]" aria-label="Artboards"><svg width="8" height="6"><use href="#down"/></svg></button>
        </div>
        <div class="flex w-[42px] items-center gap-[9px] pl-[10px] text-[#6e6e6e]">
          <button aria-label="Next artboard"><svg width="6" height="8"><use href="#right"/></svg></button>
          <button aria-label="Last artboard"><svg width="9" height="8"><path d="M7 0h2v8H7zM0 0v8l6-4z" fill="currentColor"/></svg></button>
        </div>
        <div class="flex w-[200px] items-center justify-center border-x border-[#3a3a3a]">Selection</div>
        <button class="grid w-[18px] place-items-center text-[#d0d0d0]" aria-label="Status options"><svg width="6" height="8"><use href="#right"/></svg></button>
        <div class="flex flex-1 items-center border-l border-[#222] bg-[#343434] px-[5px]">
          <svg width="7" height="9"><path d="M7 0v9L0 4.500z" fill="#e0dce0"/></svg>
          <div class="flex h-full flex-1"><div class="basis-[47%]"></div><div class="w-[17px] border-x border-[#2a2a2a] bg-[#989498]"></div></div>
          <svg class="text-[#e0dce0]" width="7" height="9"><use href="#right"/></svg>
        </div>
        <div class="w-[17px] border-x border-[#222]"></div>
      </footer>
    </section>

    <!-- Collapsed panel dock -->
    <aside class="flex w-10 shrink-0 flex-col border-r border-l-2 border-[#222] bg-[#4a4a4a]" aria-label="Panel dock">
      <button class="flex h-3 items-center justify-end border-b border-[#222] bg-[#2f2f2f] pr-[3px]" aria-label="Expand panels"><svg width="8" height="6"><use href="#collapse"/></svg></button>
      <div class="flex flex-col items-end border-b border-[#222] pr-2 pb-[3px] [&_button]:h-7 [&_button]:w-5 [&_button_svg]:mx-auto">
        <svg class="mt-[4px] mb-[2px]" width="20" height="3"><use href="#grip"/></svg>
        <button aria-label="Color panel"><svg width="20" height="16"><path d="M10 1c6-1 10 3 9 7-1 5-6 7-12 5-4-1-7-3-6-5s5 1 6-1-5-1-4-3 4-3 7-3z" fill="#c0c0c0"/><path d="M9 3h3v2H9zM14 5h2v2h-2zM14 9h2v2h-2zM10 10h2v2h-2zM6 9h2v2H6z" fill="#444"/></svg></button>
        <button aria-label="Color guide"><svg width="20" height="20"><path d="M2 1v17L8 2Q5 1 2 1z" fill="#ddd"/><path d="M2 18L8 2q5 2 7 6z" fill="#999"/><path d="M2 18L15 8q3 4 3 10z" fill="#444"/><path d="M2 1.500q15 0 16 16.500H2z" fill="none" stroke="#ccc"/></svg></button>
      </div>
      <div class="flex flex-col items-end border-b border-[#222] pr-2 pb-[3px] shadow-[inset_0_1px_0_#5c5c5c] [&_button]:h-7 [&_button]:w-5 [&_button_svg]:mx-auto">
        <svg class="mt-[4px] mb-[2px]" width="20" height="3"><use href="#grip"/></svg>
        <button aria-label="Swatches"><svg width="17" height="13"><path d="M0 0h17v13H0z" fill="#ccc"/><path d="M1 2h4v4H1z" fill="#222"/><path d="M6 2h4v4H6z" fill="#444"/><path d="M11 2h5v4h-5zM1 7h4v5H1z" fill="#777"/><path d="M6 7h4v5H6z" fill="#888"/><path d="M11 7h5v5h-5z" fill="#aaa"/></svg></button>
        <button aria-label="Brushes"><svg width="18" height="22"><path d="M5 13h8v8H5z" fill="url(#metal)"/><path d="M7 13L3 6M9 13V5M11 13l4-5" stroke="#c8c8c8" stroke-width="1.500"/><path d="M1 3l4 3-1 4-3-3zM8 0h2v5H8zM12 6l5-1v2l-4 3z" fill="#c8c8c8"/></svg></button>
        <button aria-label="Symbols"><svg width="18" height="18"><circle cx="9" cy="5" r="4" fill="#ccc"/><circle cx="5" cy="10" r="4" fill="#b4b4b4"/><circle cx="13" cy="10" r="4" fill="#b4b4b4"/><path d="M8 8h2c0 5 1 7 4 8H4c3-1 4-3 4-8z" fill="#b4b4b4"/></svg></button>
      </div>
      <div class="flex flex-col items-end border-b border-[#222] pr-2 pb-[3px] shadow-[inset_0_1px_0_#5c5c5c] [&_button]:h-7 [&_button]:w-5 [&_button_svg]:mx-auto">
        <svg class="mt-[4px] mb-[2px]" width="20" height="3"><use href="#grip"/></svg>
        <button aria-label="Stroke panel"><svg width="18" height="14"><path d="M0 1.500h18" stroke="#ccc"/><path d="M0 6h18" stroke="#ccc" stroke-width="2"/><path d="M0 11.500h18" stroke="#ccc" stroke-width="3"/></svg></button>
        <button aria-label="Gradient panel"><svg width="18" height="13"><path d="M.5.500h17v12H.5z" fill="url(#fade)" stroke="#ccc"/></svg></button>
        <button aria-label="Transparency"><svg width="18" height="18"><circle cx="7" cy="7" r="6" fill="#b4b4b4"/><circle cx="11" cy="11" r="5.500" fill="#999" fill-opacity=".6" stroke="#d0d0d0" stroke-width="1.500"/></svg></button>
      </div>
      <div class="flex flex-col items-end border-b border-[#222] pr-2 pb-[3px] shadow-[inset_0_1px_0_#5c5c5c] [&_button]:h-7 [&_button]:w-5 [&_button_svg]:mx-auto">
        <svg class="mt-[4px] mb-[2px]" width="20" height="3"><use href="#grip"/></svg>
        <button aria-label="Appearance"><svg width="18" height="18"><circle cx="9" cy="9" r="5" fill="#c4c4c4"/><circle cx="9" cy="9" r="8" fill="none" stroke="#bbb" stroke-dasharray="3 2" stroke-width="1.500"/></svg></button>
        <button aria-label="Graphic styles"><svg width="18" height="18"><path d="M4.500 7V1.500h12v13H11" fill="none" stroke="#bbb"/><path d="M4.500 11.500h5v5h-5z" fill="#888" stroke="#ddd"/><path d="M1.500 8.500h5v5h-5z" fill="none" stroke="#ddd"/></svg></button>
      </div>
    </aside>
  </main>
  <div class="flex h-[3px] shrink-0 justify-end gap-[165px] border-t border-[#c8d6ea] bg-[#8fa7cc] pt-px pr-[5px]"><span class="h-full w-[38px] bg-[#59627e]"></span><span class="h-full w-[191px] bg-[#59627e]"></span></div>
</div>
</body>
</html>
